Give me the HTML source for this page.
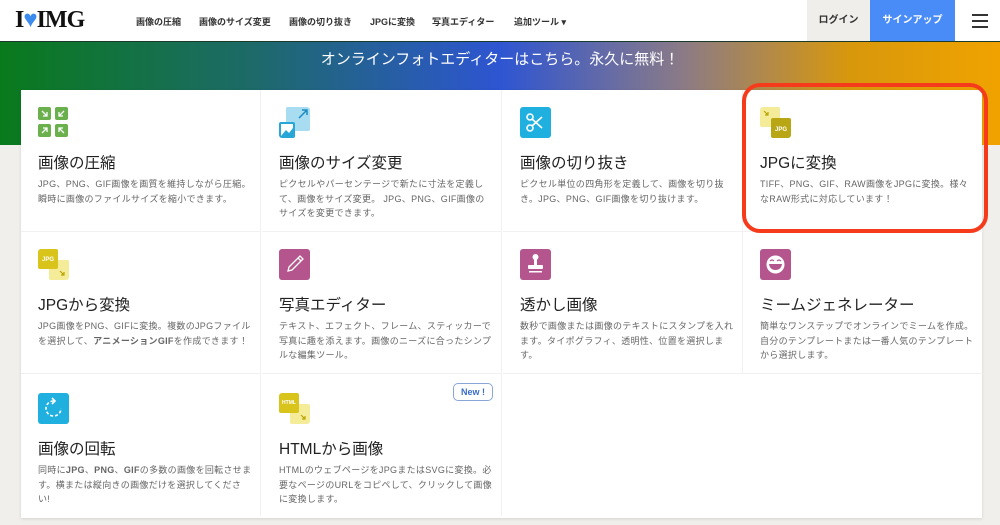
<!DOCTYPE html>
<html><head><meta charset="utf-8"><style>
*{margin:0;padding:0;box-sizing:border-box}
body{width:1000px;height:525px;overflow:hidden;background:#f1efec;font-family:"Liberation Sans","Noto Sans CJK JP",sans-serif;position:relative}
.hdr{position:absolute;left:0;top:0;width:1000px;height:41px;background:#fff}
.logo{position:absolute;left:15px;top:7px;font-family:"Liberation Serif",serif;font-weight:bold;font-size:24px;color:#111;letter-spacing:-1px}
.nav{position:absolute;top:15px;font-size:9px;color:#333;font-weight:bold}
.login{position:absolute;left:807px;top:0;width:63px;height:41px;background:#f0eeeb;font-size:10px;font-weight:bold;color:#333;text-align:center;line-height:41px}
.signup{position:absolute;left:870px;top:0;width:85px;height:41px;background:#4a8cf7;font-size:10px;font-weight:bold;color:#fff;text-align:center;line-height:41px}
.burg{position:absolute;left:972px;top:14px;width:16px}
.burg i{display:block;height:2px;background:#333;margin-bottom:4px}
.band{position:absolute;left:0;top:41px;width:1000px;height:104px;background:linear-gradient(90deg,#097a1c 0%,#1d6a68 25%,#2e55d2 50%,#8a7a88 68%,#d8980c 85%,#f0a300 100%);border-top:1px solid #1a3a2a}
.band p{position:absolute;top:6px;width:100%;text-align:center;color:#fff;font-size:15px}
.box{position:absolute;left:21px;top:90px;width:961px;height:428px;background:#fff;box-shadow:0 1px 3px rgba(0,0,0,.12)}
.c{position:absolute;width:240px;height:142px;border-right:1px solid #f1f1f1;border-bottom:1px solid #f1f1f1}
.c h3{position:absolute;left:17px;top:61px;font-size:15.5px;font-weight:normal;color:#222}
.c p{position:absolute;left:17px;top:87px;width:214px;font-size:9px;letter-spacing:0.3px;line-height:14.5px;color:#666}
.ic{position:absolute;left:17px;top:17px;width:31px;height:31px;border-radius:3px}
.red{position:absolute;left:742px;top:83px;width:246px;height:150px;border:4px solid #f53b1c;border-radius:18px}
.new{position:absolute;left:453px;top:383px;width:40px;height:18px;border:1px solid #8aa6d8;border-radius:5px;font-size:9px;color:#3a6cc8;font-weight:bold;text-align:center;line-height:16px}
</style></head><body>
<div class="hdr">
<div class="logo">I<span style="color:#3c8cf0">♥</span>IMG</div>
<div class="nav" style="left:136px">画像の圧縮</div>
<div class="nav" style="left:199px">画像のサイズ変更</div>
<div class="nav" style="left:289px">画像の切り抜き</div>
<div class="nav" style="left:370px">JPGに変換</div>
<div class="nav" style="left:432px">写真エディター</div>
<div class="nav" style="left:514px">追加ツール ▾</div>
<div class="login">ログイン</div><div class="signup">サインアップ</div>
<div class="burg"><i></i><i></i><i></i></div>
</div>
<div class="band"><p>オンラインフォトエディターはこちら。永久に無料！</p></div>
<div class="box">
<div class="c" style="left:0;top:0">
<svg class="ic" viewBox="0 0 31 31" style="border-radius:0"><g fill="#6ab04c"><rect x="0" y="0" width="13" height="13" rx="2"/><rect x="17" y="0" width="13" height="13" rx="2"/><rect x="0" y="17" width="13" height="13" rx="2"/><rect x="17" y="17" width="13" height="13" rx="2"/></g><g stroke="#fff" stroke-width="1.3" fill="none"><path d="M4 4l5 5M9 5v4H5"/><path d="M26 4l-5 5M21 5v4h4"/><path d="M4 26l5-5M5 21h4v4"/><path d="M26 26l-5-5M25 21h-4v4"/></g></svg>
<h3>画像の圧縮</h3><p>JPG、PNG、GIF画像を画質を維持しながら圧縮。瞬時に画像のファイルサイズを縮小できます。</p></div>
<div class="c" style="left:241px;top:0">
<svg class="ic" viewBox="0 0 31 31"><rect x="7" y="0" width="24" height="24" rx="2" fill="#a8dcf0"/><path d="M20 11l8-8M23 3h5v5" stroke="#1a8ac0" stroke-width="1.5" fill="none"/><rect x="0" y="15" width="16" height="16" rx="2" fill="#27a7d8"/><rect x="2" y="17" width="12" height="12" fill="#fff"/><path d="M2 29l5-6 3 3 4-5v8z" fill="#27a7d8"/></svg>
<h3>画像のサイズ変更</h3><p>ピクセルやパーセンテージで新たに寸法を定義して、画像をサイズ変更。 JPG、PNG、GIF画像のサイズを変更できます。</p></div>
<div class="c" style="left:482px;top:0">
<svg class="ic" viewBox="0 0 31 31" style="background:#1fb0e0"><g stroke="#fff" stroke-width="1.6" fill="none"><circle cx="10" cy="10" r="3"/><circle cx="10" cy="21" r="3"/><path d="M12 12l10 9M12 19l10-9"/></g></svg>
<h3>画像の切り抜き</h3><p>ピクセル単位の四角形を定義して、画像を切り抜き。JPG、PNG、GIF画像を切り抜けます。</p></div>
<div class="c" style="left:722px;top:0;border-right:none">
<svg class="ic" viewBox="0 0 31 31"><rect x="0" y="0" width="20" height="20" rx="2" fill="#f5ec9a"/><path d="M4 4l4 4M8 5v3H5" stroke="#b8a400" stroke-width="1.2" fill="none"/><rect x="11" y="11" width="20" height="20" rx="2" fill="#b9a614"/><text x="21" y="24" font-size="6" fill="#fff" text-anchor="middle" font-weight="bold" font-family="Liberation Sans">JPG</text></svg>
<h3>JPGに変換</h3><p>TIFF、PNG、GIF、RAW画像をJPGに変換。様々なRAW形式に対応しています！</p></div>

<div class="c" style="left:0;top:142px">
<svg class="ic" viewBox="0 0 31 31"><rect x="11" y="11" width="20" height="20" rx="2" fill="#f5ec9a"/><path d="M22 22l4 4M26 23v3h-3" stroke="#b8a400" stroke-width="1.2" fill="none"/><rect x="0" y="0" width="20" height="20" rx="2" fill="#d9c41c"/><text x="10" y="12" font-size="6" fill="#fff" text-anchor="middle" font-weight="bold" font-family="Liberation Sans">JPG</text></svg>
<h3>JPGから変換</h3><p>JPG画像をPNG、GIFに変換。複数のJPGファイルを選択して、<b>アニメーションGIF</b>を作成できます！</p></div>
<div class="c" style="left:241px;top:142px">
<svg class="ic" viewBox="0 0 31 31" style="background:#b4558e"><path d="M9 22l1-4 11-11 3 3-11 11zM19 9l3 3" stroke="#fff" stroke-width="1.3" fill="none"/></svg>
<h3>写真エディター</h3><p>テキスト、エフェクト、フレーム、スティッカーで写真に趣を添えます。画像のニーズに合ったシンプルな編集ツール。</p></div>
<div class="c" style="left:482px;top:142px">
<svg class="ic" viewBox="0 0 31 31" style="background:#b4558e"><g fill="#fff"><circle cx="15.5" cy="8" r="3"/><rect x="14" y="10" width="3" height="6"/><rect x="8" y="16" width="15" height="4" rx="1"/><rect x="9" y="22" width="13" height="1.5"/></g></svg>
<h3>透かし画像</h3><p>数秒で画像または画像のテキストにスタンプを入れます。タイポグラフィ、透明性、位置を選択します。</p></div>
<div class="c" style="left:722px;top:142px;border-right:none">
<svg class="ic" viewBox="0 0 31 31" style="background:#b4558e"><circle cx="15.5" cy="15.5" r="9" fill="#fff"/><path d="M9 15h13q-1 6-6.5 6T9 15z" fill="#b4558e"/><path d="M10 12q2-2 4 0M17 12q2-2 4 0" stroke="#b4558e" stroke-width="1.2" fill="none"/></svg>
<h3>ミームジェネレーター</h3><p>簡単なワンステップでオンラインでミームを作成。自分のテンプレートまたは一番人気のテンプレートから選択します。</p></div>

<div class="c" style="left:0;top:284px;border-bottom:none">
<svg class="ic" viewBox="0 0 31 31" style="background:#1fb0e0;top:19px"><path d="M15.5 8a7.5 7.5 0 1 0 7.5 7.5" stroke="#fff" stroke-width="1.6" fill="none" stroke-dasharray="3 2"/><path d="M14 5l3 3-3 3" stroke="#fff" stroke-width="1.6" fill="none"/></svg>
<h3 style="top:63px">画像の回転</h3><p style="top:89px">同時に<b>JPG</b>、<b>PNG</b>、<b>GIF</b>の多数の画像を回転させます。横または縦向きの画像だけを選択してください!</p></div>
<div class="c" style="left:241px;top:284px;border-bottom:none">
<svg class="ic" viewBox="0 0 31 31" style="top:19px"><rect x="11" y="11" width="20" height="20" rx="2" fill="#f5ec9a"/><path d="M22 22l4 4M26 23v3h-3" stroke="#b8a400" stroke-width="1.2" fill="none"/><rect x="0" y="0" width="20" height="20" rx="2" fill="#d9c41c"/><text x="10" y="11" font-size="5" fill="#fff" text-anchor="middle" font-weight="bold" font-family="Liberation Sans">HTML</text></svg>
<h3 style="top:63px">HTMLから画像</h3><p style="top:89px">HTMLのウェブページをJPGまたはSVGに変換。必要なページのURLをコピペして、クリックして画像に変換します。</p></div>
</div>
<div class="new">New !</div>
<div class="red"></div>
</body></html>
